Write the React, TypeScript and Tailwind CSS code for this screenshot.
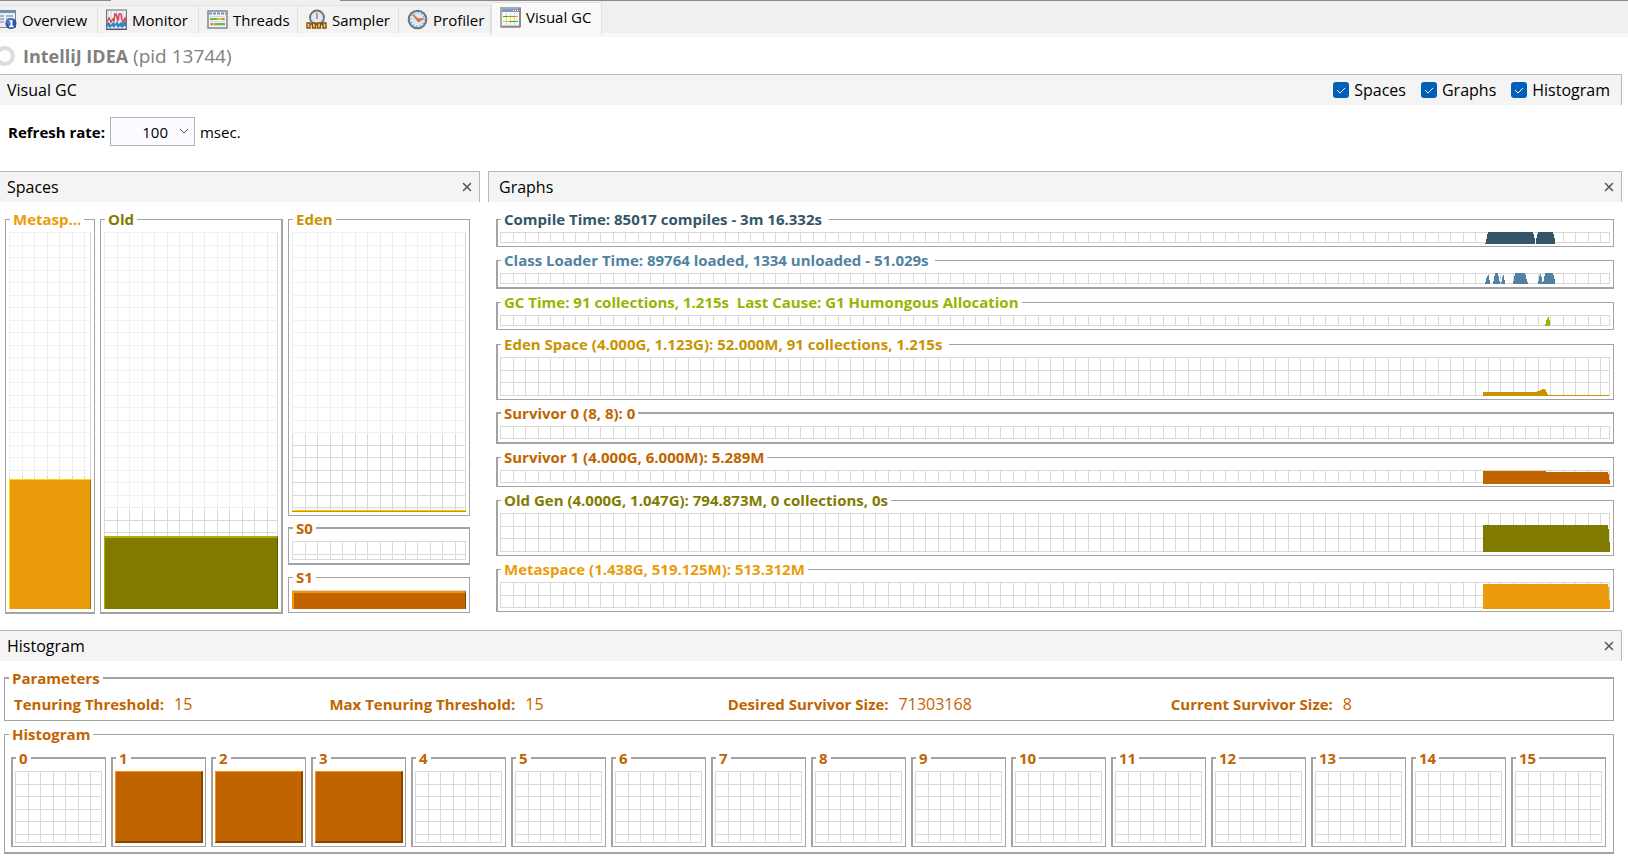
import type { ReactNode } from "react";
import { X } from "lucide-react";

const GRID =
  "border-r border-b border-[#d9d9d9] bg-[size:25px_25px] bg-[image:linear-gradient(to_right,#d9d9d9_1px,transparent_1px,transparent_13px,#d9d9d9_13px,#d9d9d9_14px,transparent_14px),linear-gradient(to_bottom,#d9d9d9_1px,transparent_1px,transparent_13px,#d9d9d9_13px,#d9d9d9_14px,transparent_14px)]";

const OverviewIcon = () => (
  <svg width="21" height="21" viewBox="0 0 21 21" className="-ml-1 shrink-0">
    <rect x="0.5" y="1.5" width="19" height="17" fill="#e9eef5" stroke="#7d8791" />
    <rect x="1" y="2" width="18" height="2" fill="#6f93c4" />
    <path d="M3 7h5M3 10h5M3 13h5M10 7h7M10 10h5" stroke="#9aa5b4" strokeWidth="1.4" />
    <circle cx="15" cy="14.5" r="5.5" fill="#2b50a8" />
    <circle cx="14" cy="12.5" r="3.5" fill="#5478c8" />
    <path d="M13.5 12h2v5M13 17.3h4.5" stroke="#fff" strokeWidth="1.7" fill="none" />
  </svg>
);

const MonitorIcon = () => (
  <svg width="21" height="21" viewBox="0 0 21 21" className="shrink-0">
    <rect x="0.5" y="1" width="20" height="19" fill="#d8e2ee" stroke="#6c747d" />
    <path d="M3.5 2v17M6.5 2v17M9.5 2v17M12.5 2v17M15.5 2v17M18.5 2v17" stroke="#fff" />
    <path d="M1 14l2-1 2 3 2-3 2 2 2-3 2 3 2-2 2 1 2-3 1 2v5l-2-1-2 2-2-2-2 2-2-3-2 3-2-2-2 2-2-2-1 2z" fill="#2f86c8" />
    <path d="M1 13l2-4 2 4 2-3 1 2 1-7h1l2 7 1-7h2l1 6 1 2 2-4 1 3" stroke="#e0454b" strokeWidth="1.5" fill="none" />
    <path d="M0 20.5h21" stroke="#4f565e" />
  </svg>
);

const ThreadsIcon = () => (
  <svg width="21" height="21" viewBox="0 0 21 21" className="shrink-0">
    <rect x="1" y="2" width="19" height="17" fill="#f2f4ee" stroke="#78818a" strokeWidth="1.4" />
    <path d="M2 4.5h17" stroke="#6f93c4" strokeWidth="2" strokeDasharray="3 1" />
    <path d="M3 7.5h15M3 12.5h15M3 16.5h15" stroke="#d3d8d0" />
    <path d="M3 10h7M8 15h10" stroke="#3ca32c" strokeWidth="1.6" />
    <path d="M10 10h8M3 15h5" stroke="#d9a520" strokeWidth="1.6" />
    <path d="M15 10h2M4 15h2" stroke="#c85028" strokeWidth="1.2" />
  </svg>
);

const SamplerIcon = () => (
  <svg width="21" height="21" viewBox="0 0 21 21" className="shrink-0">
    <circle cx="11" cy="8.5" r="7" fill="#dceafa" stroke="#68727c" strokeWidth="1.8" />
    <circle cx="11" cy="8.5" r="5.2" fill="none" stroke="#a8c4e0" strokeDasharray="1 1.7" />
    <path d="M11 4v6" stroke="#e07038" strokeWidth="1.5" />
    <path d="M3 15h15" stroke="#70420c" strokeWidth="1.6" />
    <path d="M1 14h3v5H1zM6.5 14h3v5h-3zM11.5 14h3v5h-3zM17 14h3v5h-3z" fill="#f3cd7a" stroke="#8a5208" strokeWidth="1.4" />
  </svg>
);

const ProfilerIcon = () => (
  <svg width="21" height="21" viewBox="0 0 21 21" className="shrink-0">
    <circle cx="10.5" cy="10.5" r="8.8" fill="#d6e8fa" stroke="#6b747d" strokeWidth="2" />
    <circle cx="10.5" cy="10.5" r="6.8" fill="none" stroke="#6f9ccb" strokeWidth="1.5" strokeDasharray="1 2.56" />
    <path d="M6 5.500l4.500 4.500h5l-4 2.500-2-2.500z" stroke="#e0703a" strokeWidth="1.5" fill="#e0703a" />
  </svg>
);

const VisualGcIcon = () => (
  <svg width="21" height="21" viewBox="0 0 21 21" className="shrink-0">
    <rect x="1" y="1" width="19" height="18.5" fill="#f7f7f7" stroke="#a9a9a9" strokeWidth="2" />
    <path d="M20 1v19H1" stroke="#6e6e6e" fill="none" />
    <rect x="2" y="2" width="17" height="3" fill="#7c98c6" />
    <path d="M13 3.5h1M15 3.5h1M17 3.5h1" stroke="#fff" />
    <path d="M6.5 6v12M10.5 6v12M14.5 6v12" stroke="#d8d8d8" />
    <path d="M3 9.5h5" stroke="#20c000" />
    <path d="M8 9.5h10" stroke="#e8a800" />
    <path d="M10 9.5h1M13 9.5h1" stroke="#e02020" />
    <path d="M3 14.5h6" stroke="#f0c800" />
    <path d="M9 14.5h9" stroke="#20c000" />
  </svg>
);

const tabs = [
  { label: "Overview", icon: <OverviewIcon />, width: "w-[98px]" },
  { label: "Monitor", icon: <MonitorIcon />, width: "w-[101px] pl-2" },
  { label: "Threads", icon: <ThreadsIcon />, width: "w-[99px] pl-2" },
  { label: "Sampler", icon: <SamplerIcon />, width: "w-[101px] pl-2" },
  { label: "Profiler", icon: <ProfilerIcon />, width: "w-[92px] pl-2" },
];

type GroupProps = {
  title: string;
  className?: string;
  children: ReactNode;
};

const Group = ({ title, className = "", children }: GroupProps) => (
  <fieldset className={`flex min-w-0 flex-col border-[#a3a3a3] ${className}`}>
    <legend className="ml-px h-5 px-[3px] text-[15px] leading-5 font-bold whitespace-pre">
      {title}
    </legend>
    {children}
  </fieldset>
);

const PanelHeader = ({ title, className = "" }: { title: string; className?: string }) => (
  <div
    className={`flex h-[31px] items-center justify-between border-t border-r border-[#b9b9b9] bg-[#f4f4f4] pr-[3px] ${className}`}
  >
    <h2>{title}</h2>
    <button type="button" aria-label={`Close ${title}`} className="p-0.5 text-[#555]">
      <X size={14} strokeWidth={2.5} />
    </button>
  </div>
);

type SpaceProps = {
  title: string;
  // reserved, committed and used shares of the column
  parts: [number, number, number];
  className: string;
  fill?: string;
  body?: string;
};

const Space = ({ title, parts, className, fill, body = "flex-1" }: SpaceProps) => (
  <Group title={title} className={`px-[3px] pt-[3px] pb-[3px] ${className}`}>
    <div className={`flex flex-col ${body} ${GRID}`}>
      <div className="basis-0 bg-white/60" style={{ flexGrow: parts[0] }} />
      <div className="basis-0" style={{ flexGrow: parts[1] }} />
      {fill && <div className={`-mr-px -mb-px basis-0 ${fill}`} style={{ flexGrow: parts[2] }} />}
    </div>
  </Group>
);

type GraphProps = {
  title: string;
  color: string;
  height: string;
  border?: string;
  path?: string;
};

const Graph = ({ title, color, height, border = "border border-l-2", path }: GraphProps) => (
  <Group title={title} className={`pt-[3px] pr-[3px] pb-[3px] pl-[2px] ${border} ${color}`}>
    <div className={`flex justify-end ${height} ${GRID}`}>
      {path && (
        <svg width="127" height="40" className="-mr-px shrink-0 overflow-visible" shapeRendering="crispEdges">
          <path d={path} fill="currentColor" />
        </svg>
      )}
    </div>
  </Group>
);

const timers: GraphProps[] = [
  {
    title: "Compile Time: 85017 compiles - 3m 16.332s ",
    color: "text-[#335669]",
    height: "h-[11px]",
    path: "M2 12V11L3 10L5 0H50L52 8V12ZM53 12V8L55 0H70L72 8V12Z",
  },
  {
    title: "Class Loader Time: 89764 loaded, 1334 unloaded - 51.029s ",
    color: "text-[#5082a1]",
    height: "h-[11px]",
    border: "border border-b-2 border-l-2",
    path: "M2 11L4 3L6 2L7 11ZM10 11L12 0H15L17 11ZM18 11L20 2H21L22 11ZM30 11L32 0H42L45 11ZM55 11L57 1H58L60 11ZM60 11L62 0H70L72 8V11Z",
  },
  {
    title: "GC Time: 91 collections, 1.215s  Last Cause: G1 Humongous Allocation",
    color: "text-[#96b400]",
    height: "h-[11px]",
    path: "M62 11L64 3L66 2L67 8V11Z",
  },
];

const memory: GraphProps[] = [
  {
    title: "Eden Space (4.000G, 1.123G): 52.000M, 91 collections, 1.215s ",
    color: "text-[#c99300]",
    height: "h-[39px]",
    path: "M0 39V35H54V34H57V33H59V32H62V33H63V35H64V37H65V38H126V39Z",
  },
  {
    title: "Survivor 0 (8, 8): 0",
    color: "text-[#c16400]",
    height: "h-[13px]",
    border: "border-2 border-r",
  },
  {
    title: "Survivor 1 (4.000G, 6.000M): 5.289M",
    color: "text-[#c16400]",
    height: "h-[13px]",
    path: "M0 14V1H63V2H125V4H126V10H127V14Z",
  },
  {
    title: "Old Gen (4.000G, 1.047G): 794.873M, 0 collections, 0s",
    color: "text-[#807b00]",
    height: "h-[39px]",
    path: "M0 39V12H125V16H126V29H127V39Z",
  },
  {
    title: "Metaspace (1.438G, 519.125M): 513.312M",
    color: "text-[#ec9c0a]",
    height: "h-[26px]",
    path: "M0 27V2H125V5H126V18H127V27Z",
  },
];

const params = [
  ["Tenuring Threshold:", "15"],
  ["Max Tenuring Threshold:", "15"],
  ["Desired Survivor Size:", "71303168"],
  ["Current Survivor Size:", "8"],
];

const ages = Array.from({ length: 16 }, (_, i) => i);
const filledAges = [1, 2, 3];

const App = () => {
  return (
    <div className="min-h-screen overflow-hidden bg-white font-['Open_Sans','Noto_Sans',sans-serif] text-base leading-5 text-black">
      <div className="flex h-px bg-[#8a8a8a]">
        <div className="ml-[111px] w-[229px] bg-[#f0f0f0]" />
      </div>
      <nav className="flex h-9 items-start border-b-4 border-[#f9f9f9] bg-[#f0f0f0] text-[15px]">
        {tabs.map((tab) => (
          <button
            key={tab.label}
            type="button"
            className={`mt-1 flex h-7 shrink-0 items-center gap-[5px] border-t border-r border-[#e2e2e2] bg-[#f2f2f2] whitespace-nowrap ${tab.width}`}
          >
            {tab.icon}
            {tab.label}
          </button>
        ))}
        <button
          type="button"
          className="mt-px flex h-[33px] shrink-0 items-center gap-[5px] border-x border-t border-[#e2e2e2] bg-[#f9f9f9] pr-2.5 pb-1 pl-2 whitespace-nowrap"
        >
          <VisualGcIcon />
          Visual GC
        </button>
      </nav>

      <div className="flex h-[37px] items-center text-[#808080]">
        <svg width="16" height="22" viewBox="0 0 16 22" className="mr-[7px] shrink-0">
          <circle cx="5" cy="11" r="8" fill="none" stroke="#dcdce1" strokeWidth="4" />
        </svg>
        <h1 className="text-[19px]">
          <b className="text-lg">IntelliJ IDEA</b> (pid 13744)
        </h1>
      </div>

      <div className="pr-1.5">
        <div className="flex h-[31px] items-center justify-between border-t border-r border-[#b9b9b9] bg-[#f4f4f4] pr-[11px] pl-[7px]">
          <h2>Visual GC</h2>
          <div className="flex gap-[15px]">
            {["Spaces", "Graphs", "Histogram"].map((name) => (
              <label key={name} className="relative flex items-center gap-[5px]">
                <input
                  type="checkbox"
                  defaultChecked
                  className="size-4 appearance-none rounded-[3px] bg-[#005fb8]"
                />
                <svg width="16" height="16" className="pointer-events-none absolute left-0">
                  <path d="M4 8l3 3 5-5" fill="none" stroke="#fff" />
                </svg>
                {name}
              </label>
            ))}
          </div>
        </div>

        <div className="flex items-center gap-[5px] pt-3 pb-[25px] pl-2 text-[15px]">
          <label htmlFor="rate" className="font-bold">
            Refresh rate:
          </label>
          <div className="relative">
            <select
              id="rate"
              defaultValue="100"
              className="h-[29px] w-[85px] appearance-none border border-[#a9b4be] bg-[#fafcff] pr-[26px] [text-align-last:right]"
            >
              <option>100</option>
              <option>200</option>
              <option>500</option>
            </select>
            <svg width="10" height="6" className="pointer-events-none absolute top-[11px] right-1.5">
              <path d="M1 1l4 4 4-4" fill="none" stroke="#555" />
            </svg>
          </div>
          <span>msec.</span>
        </div>

        <div className="grid grid-cols-[minmax(0,480fr)_minmax(0,1134fr)] gap-2">
          <section className="flex flex-col">
            <PanelHeader title="Spaces" className="pl-[7px]" />
            <div className="grid flex-1 grid-cols-[minmax(0,90fr)_minmax(0,183fr)_minmax(0,182fr)] gap-[5px] pt-[7px] pr-2.5 pb-4 pl-[5px]">
              <Space
                title="Metasp..."
                parts={[245, 3, 129]}
                className="border border-b-2 text-[#ec9c0a]"
                fill="border-t border-r border-l border-t-[#ffd800] border-r-[#a56d07] border-l-[#ffd800] bg-[#ec9c0a]"
              />
              <Space
                title="Old"
                parts={[278, 27, 71]}
                className="border border-r-2 border-b-2 text-[#807b00]"
                fill="border-t-2 border-r border-l border-t-[#b3ac00] border-r-[#595600] border-l-[#b3ac00] bg-[#807b00]"
              />
              <div className="flex flex-col gap-[2px] pb-px">
                <div className="flex flex-1 flex-col *:flex-1">
                  <Space
                    title="Eden"
                    parts={[200, 75, 1]}
                    className="border text-[#c99300]"
                    fill="border-t border-[#ffce00] bg-[#c99300]"
                  />
                </div>
                <Space
                  title="S0"
                  parts={[0, 1, 0]}
                  className="border border-y-2 text-[#c16400]"
                  body="h-[19px]"
                />
                <Space
                  title="S1"
                  parts={[0, 1, 17]}
                  className="border text-[#c16400]"
                  fill="border-t-2 border-r border-l-2 border-t-[#ff9000] border-r-[#884600] border-l-[#ff9000] bg-[#c16400]"
                  body="h-[19px]"
                />
              </div>
            </div>
          </section>

          <section>
            <PanelHeader title="Graphs" className="border-l pl-2.5" />
            <div className="flex flex-col gap-1 pt-[7px] pr-2 pb-[18px] pl-2">
              <div className="flex flex-col gap-[3px]">
                {timers.map((graph) => (
                  <Graph key={graph.title} {...graph} />
                ))}
              </div>
              <div className="flex flex-col gap-[3px]">
                {memory.map((graph) => (
                  <Graph key={graph.title} {...graph} />
                ))}
              </div>
            </div>
          </section>
        </div>

        <section>
          <PanelHeader title="Histogram" className="pl-[7px]" />
          <div className="flex flex-col gap-[3px] pt-[7px] pr-2 pl-1 text-[#c16400]">
            <Group title="Parameters" className="border border-t-2 px-[3px]">
              <dl className="grid grid-cols-[316fr_399fr_444fr_440fr] pt-1.5 pb-1.5 pl-1.5">
                {params.map(([name, value]) => (
                  <div key={name} className="flex gap-2.5 whitespace-nowrap">
                    <dt className="text-[15px] font-bold">{name}</dt>
                    <dd>{value}</dd>
                  </div>
                ))}
              </dl>
            </Group>
            <Group title="Histogram" className="border border-b-2 px-[3px]">
              <div className="grid grid-cols-16 gap-[5px] pt-1 pr-1 pb-[5px] pl-[3px]">
                {ages.map((age) => (
                  <Group
                    key={age}
                    title={String(age)}
                    className="border border-t-2 border-l-2 px-[2px] pt-[3px] pb-[3px]"
                  >
                    {filledAges.includes(age) ? (
                      <div className="h-[72px] border-t border-r-2 border-b-2 border-l border-t-[#ff9000] border-r-[#884600] border-b-[#884600] border-l-[#ff9000] bg-[#c16400]" />
                    ) : (
                      <div className={`mr-px h-[72px] ${GRID}`} />
                    )}
                  </Group>
                ))}
              </div>
            </Group>
          </div>
        </section>
      </div>
    </div>
  );
};

export default App;
